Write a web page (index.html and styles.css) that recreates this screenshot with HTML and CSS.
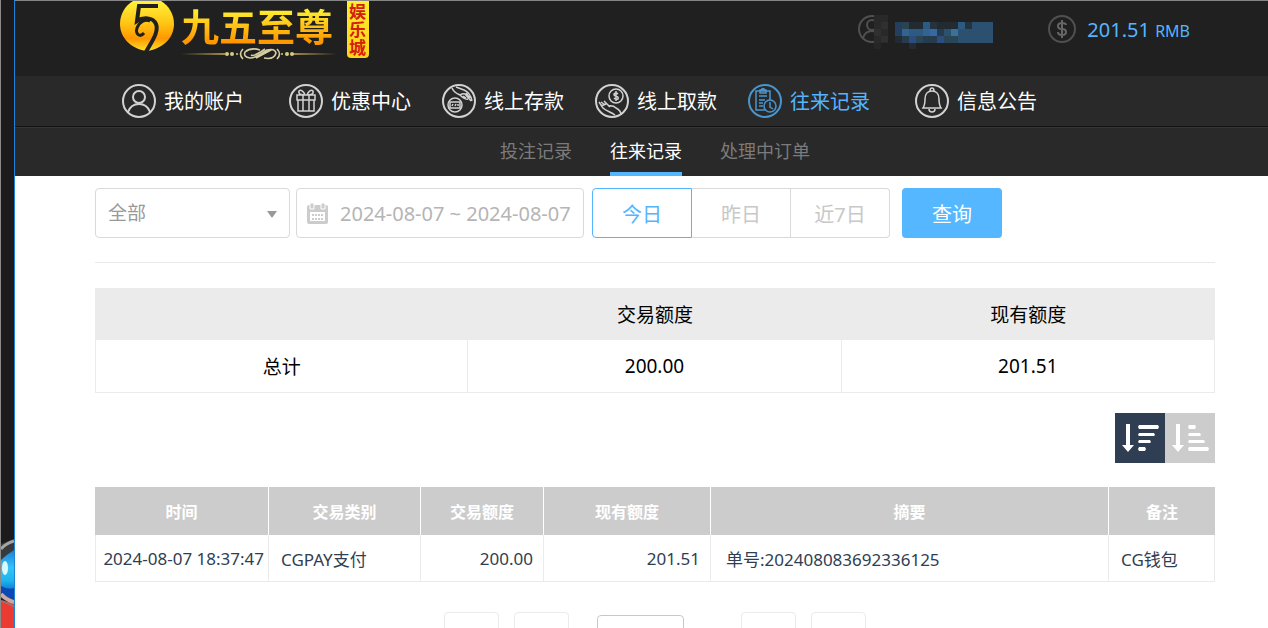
FILE: index.html
```
<!DOCTYPE html>
<html lang="zh-CN">
<head>
<meta charset="utf-8">
<meta name="viewport" content="width=device-width,initial-scale=1.0">
<title>往来记录</title>
<link rel="stylesheet" href="styles.css">
</head>
<body>
<div class="backdrop">
	<svg width="13" height="92" viewBox="0 0 13 92" aria-hidden="true">
		<defs>
			<linearGradient id="glass" x1="0" y1="0" x2="0" y2="1">
				<stop offset="0" stop-color="#1b7fdc"/>
				<stop offset=".4" stop-color="#35c4f4"/>
				<stop offset=".7" stop-color="#1db4ee"/>
				<stop offset="1" stop-color="#0b5fc6"/>
			</linearGradient>
		</defs>
		<path d="M0 66H13V92H0z" fill="#ea3a32"/>
		<path d="M0 8Q6 5 13 3V66L0 62z" fill="#37393b"/>
		<path d="M0 13Q4 8 13 5" fill="none" stroke="#a5a5a5" stroke-width="3"/>
		<path d="M0 24Q5 19 13 14V58Q6 56 0 50z" fill="url(#glass)"/>
		<ellipse cx="4" cy="32" rx="3" ry="7" fill="#d9fbff"/>
		<path d="M0 50Q7 54 13 52V63Q5 62 0 56z" fill="#0c48b5"/>
		<path d="M0 58Q5 64 13 66" fill="none" stroke="#c9a9a5" stroke-width="4"/>
		<path d="M0 65Q6 66 13 71" fill="none" stroke="#a96c68" stroke-width="2"/>
	</svg>
</div>
<div class="page">
	<header class="header">
		<a class="logo" href="#">
			<svg class="logo_mark" width="54" height="51" viewBox="0 0 54 51" aria-hidden="true">
				<defs>
					<linearGradient id="gold" x1="0" y1="0" x2="0" y2="1">
						<stop offset="0" stop-color="#fff23a"/>
						<stop offset=".45" stop-color="#ffc414"/>
						<stop offset=".75" stop-color="#ff9800"/>
						<stop offset="1" stop-color="#ffe02a"/>
					</linearGradient>
				</defs>
				<path d="M13 0H41C49 5 54 13 54 23C54 36 44 47 28 50C13 49 0 38 0 23C0 13 5 5 13 0z" fill="url(#gold)"/>
				<path d="M38 5H19L17 20C23 16 33 16 36 23C39 31 32 40 26 51" fill="none" stroke="#202020" stroke-width="4"/>
				<path d="M24 32C20 37 15 33 17 27C19 21 25 18 30 20" fill="none" stroke="#202020" stroke-width="3"/>
			</svg>
			<span class="logo_text">
				<strong>九五至尊</strong>
				<svg width="156" height="12" viewBox="0 0 156 12" aria-hidden="true">
					<path d="M0 6L44 5V7zM112 5L156 6L112 7z" fill="#a58f4c"/>
					<g fill="#d5ca82"><circle cx="46" cy="6" r="2"/><circle cx="51" cy="6" r="2"/><circle cx="56" cy="6" r="1"/><circle cx="101" cy="6" r="1"/><circle cx="106" cy="6" r="2"/><circle cx="111" cy="6" r="2"/></g>
					<path d="M62 1Q57 6 62 11M96 1Q101 6 96 11M79 2Q70 -1 64 4Q62 9 69 10Q75 10 86 2Q94 0 95 5Q93 12 83 10M70 7Q73 9 84 1M75 10L90 2" fill="none" stroke="#d8cfa0" stroke-width="1.6"/>
				</svg>
			</span>
			<span class="seal">娱乐城</span>
		</a>
		<div class="user">
			<svg class="user_name" width="136" height="28" viewBox="0 1 136 28" role="img" aria-label="会员账号">
				<g fill="none" stroke="#505050" stroke-width="2">
					<circle cx="14" cy="15" r="13"/>
					<circle cx="14" cy="11" r="5"/>
					<path d="M5 24Q7 17 14 17Q21 17 23 24"/>
				</g>
				<g shape-rendering="crispEdges">
					<path d="M16 1h14v28H16z" fill="#292929"/>
					<path d="M16 15h7v7h-7zM23 8h7v7h-7zM23 22h7v6h-7z" fill="#303030"/>
					<path d="M16 29h7v6h-7z" fill="#262626"/>
					<path d="M37 8h98v21H37z" fill="#2b5070"/>
					<path d="M37 8h7v14h-7z" fill="#263e5e"/>
					<path d="M44 8h7v7h-7z" fill="#294351"/>
					<path d="M51 8h14v7H51zM79 8h21v7H79zM37 22h7v7h-7z" fill="#222a32"/>
					<path d="M72 8h7v7h-7zM107 8h7v7h-7z" fill="#24343e"/>
					<path d="M65 8h7v7h-7zM100 8h7v7h-7zM51 15h14v7H51z" fill="#2d5a83"/>
					<path d="M44 15h7v7h-7zM65 15h7v7h-7z" fill="#326493"/>
					<path d="M72 15h7v7h-7z" fill="#3569a6"/>
					<path d="M93 15h7v7h-7z" fill="#3a7197"/>
					<path d="M79 15h7v7h-7zM44 22h7v7h-7zM65 22h14v7H65z" fill="#263b4c"/>
					<path d="M51 22h7v7h-7zM79 22h7v7h-7z" fill="#2d4d7d"/>
					<path d="M58 22h7v7h-7zM86 22h14v7H86z" fill="#294556"/>
					<path d="M51 29h7v6h-7z" fill="#222c35"/>
				</g>
			</svg>
			<svg width="28" height="28" viewBox="0 0 28 28" fill="none" stroke="#505050" stroke-width="2" aria-hidden="true">
				<circle cx="14" cy="14" r="13"/>
				<path d="M14 5V23M18 10Q18 8 14 8Q10 8 10 11Q10 14 14 14Q18 14 18 17Q18 20 14 20Q10 20 10 17" stroke="#666"/>
			</svg>
			<span class="balance">201.51 <small>RMB</small></span>
		</div>
	</header>
	<nav class="nav" aria-label="主导航">
		<div class="nav_group">
			<a href="#">
				<svg viewBox="0 0 34 34"><circle cx="17" cy="17" r="16"/><circle cx="17" cy="13" r="6"/><path d="M6 28Q9 20 17 20Q25 20 28 28"/></svg>
				我的账户
			</a>
		</div>
		<div class="nav_group">
			<a href="#">
				<svg viewBox="0 0 34 34"><circle cx="17" cy="17" r="16"/><g class="fine"><path d="M8 11H26V16H8zM9 16V27H25V16M14 11V27M20 11V27M16 11C12 11 9 10 10 7C12 5 15 8 16 11M18 11C22 11 25 10 24 7C22 5 19 8 18 11"/></g></svg>
				优惠中心
			</a>
			<a href="#">
				<svg viewBox="0 0 34 34"><circle cx="17" cy="17" r="16"/><g class="fine"><circle cx="13" cy="21" r="7"/><path d="M8 18H18V24H8zM10 22L11 20M13 22L14 20M16 22V20M10 4C12 9 16 10 18 11C20 13 23 16 26 15M14 3L22 6C27 8 29 12 30 17M18 11Q21 9 23 10L29 17M24 9L28 14M21 12L24 14"/></g></svg>
				线上存款
			</a>
			<a href="#">
				<svg viewBox="0 0 34 34"><circle cx="17" cy="17" r="16"/><g class="fine"><circle cx="21" cy="12" r="7"/><path d="M21 7V17M23 10Q21 8 19 10Q19 12 21 12Q24 13 23 15Q21 16 19 14M4 18L8 24C11 27 16 28 20 31M6 18L10 21M9 17L15 23M13 22Q18 21 21 24C25 26 26 29 26 31M6 22L11 20"/></g></svg>
				线上取款
			</a>
			<a class="on" href="#">
				<svg viewBox="0 0 34 34"><circle cx="17" cy="17" r="16"/><g class="fine"><path d="M17 26H8V7H22V16M12 6H18V9H12zM13 6Q15 3 17 6M11 12H19M11 16H17M11 19H15M11 22H15"/><circle cx="22" cy="22" r="6"/><path d="M22 18V23L25 25"/></g></svg>
				往来记录
			</a>
		</div>
		<div class="nav_group">
			<a href="#">
				<svg viewBox="0 0 34 34"><circle cx="17" cy="17" r="16"/><path class="fine" d="M8 24Q10 21 10 15C10 10 13 7 17 7C21 7 24 10 24 15Q24 21 26 24zM15 7Q15 4 17 4Q19 4 19 7M14 25Q14 28 17 28Q20 28 20 25"/></svg>
				信息公告
			</a>
		</div>
	</nav>
	<nav class="subnav" aria-label="记录">
		<a href="#">投注记录</a>
		<a class="on" href="#">往来记录</a>
		<a href="#">处理中订单</a>
	</nav>
	<main class="content">
		<form class="filter">
			<div class="select">
				<select aria-label="交易类别">
					<option>全部</option>
				</select>
			</div>
			<label class="date">
				<svg width="21" height="21" viewBox="0 0 21 21" role="img" aria-label="日期">
					<path d="M2 2H19Q21 2 21 4V19Q21 21 19 21H2Q0 21 0 19V4Q0 2 2 2z" fill="#ccc"/>
					<path d="M3 9H18V18H3z" fill="#fff"/>
					<path d="M3 0H7V6H3zM14 0H18V6H14z" fill="#ccc" stroke="#fff"/>
					<path d="M5 11h2v2H5zM8 11h2v2H8zM11 11h2v2h-2zM14 11h2v2h-2zM5 15h2v2H5zM8 15h2v2H8zM11 15h2v2h-2zM14 15h2v2h-2z" fill="#ccc"/>
				</svg>
				<input type="text" value="2024-08-07 ~ 2024-08-07">
			</label>
			<div class="range">
				<button type="button" class="on">今日</button>
				<button type="button">昨日</button>
				<button type="button">近7日</button>
			</div>
			<button type="submit" class="query">查询</button>
		</form>
		<table class="summary">
			<thead>
				<tr><th></th><th>交易额度</th><th>现有额度</th></tr>
			</thead>
			<tbody>
				<tr><td>总计</td><td>200.00</td><td>201.51</td></tr>
			</tbody>
		</table>
		<div class="sort">
			<button type="button" class="on" aria-label="降序">
				<svg width="50" height="50" viewBox="0 0 50 50"><path d="M11 11H15V32H19L13 39L7 32H11zM24 12H43L44 14L43 16H24L23 14zM24 20H39L40 22L39 23H24L23 22zM24 27H35L36 29L35 30H24L23 29zM24 34H30L31 36L30 38H24L23 36z"/></svg>
			</button>
			<button type="button" aria-label="升序">
				<svg width="50" height="50" viewBox="0 0 50 50"><path d="M11 11H15V32H19L13 39L7 32H11zM24 12H30L31 14L30 16H24L23 14zM24 20H35L36 22L35 23H24L23 22zM24 27H39L40 29L39 30H24L23 29zM24 34H43L44 36L43 38H24L23 36z"/></svg>
			</button>
		</div>
		<table class="records">
			<colgroup>
				<col class="c_time"><col class="c_type"><col class="c_amount"><col class="c_balance"><col><col class="c_note">
			</colgroup>
			<thead>
				<tr><th>时间</th><th>交易类别</th><th>交易额度</th><th>现有额度</th><th>摘要</th><th>备注</th></tr>
			</thead>
			<tbody>
				<tr>
					<td class="time">2024-08-07 18:37:47</td>
					<td>CGPAY支付</td>
					<td class="num">200.00</td>
					<td class="num">201.51</td>
					<td class="memo">单号:202408083692336125</td>
					<td>CG钱包</td>
				</tr>
			</tbody>
		</table>
		<div class="pager">
			<div class="pager_group">
				<button type="button" aria-label="首页"></button>
				<button type="button" aria-label="上一页"></button>
			</div>
			<input type="text" aria-label="页码">
			<div class="pager_group">
				<button type="button" aria-label="下一页"></button>
				<button type="button" aria-label="末页"></button>
			</div>
		</div>
	</main>
</div>
</body>
</html>
```
FILE: styles.css
```
* {
    box-sizing: border-box;
}

body {
    display: flex;
    height: 100vh;
    margin: 0;
    font-family: "Noto Sans", "Noto Sans CJK SC", sans-serif;
    font-size: 20px;
    background: #fff;
}

a {
    color: inherit;
    text-decoration: none;
}

svg {
    display: block;
    flex: none;
}

button, input, select {
    margin: 0;
    padding: 0;
    border: 0;
    background: none;
    font: inherit;
    color: inherit;
}

.backdrop {
    display: flex;
    flex: none;
    align-items: flex-end;
    overflow: hidden;
    width: 15px;
    border-left: 1px solid #8a8a8a;
    border-right: 1px solid #1c83d8;
    background: #1c1a1b;
}

.page {
    flex: 1;
    min-width: 0;
    overflow-y: auto;
    scrollbar-width: none;
}

/* header */
.header {
    display: flex;
    justify-content: space-between;
    height: 76px;
    padding: 0 78px 0 105px;
    border-top: 1px solid #868686;
    background: #202020;
}

.logo {
    display: flex;
    align-items: flex-start;
    gap: 7px;
}

.logo_text strong {
    display: block;
    font-family: "Noto Sans CJK SC", sans-serif;
    font-size: 38px;
    font-weight: 700;
    line-height: 47px;
    color: transparent;
    background: linear-gradient(#ffee2e 20%, #ff9800 85%);
    -webkit-background-clip: text;
    background-clip: text;
}

.seal {
    width: 22px;
    height: 57px;
    margin-left: 3px;
    padding: 1px 2px;
    border-radius: 0 0 4px 4px;
    background: linear-gradient(#ffee2e, #ffd21c);
    font-family: "Noto Sans CJK SC", sans-serif;
    font-size: 17px;
    font-weight: 700;
    line-height: 18px;
    color: #d3200c;
}

.user {
    display: flex;
    align-items: center;
    height: 56px;
}

.user_name {
    overflow: visible;
    margin-right: 54px;
}

.balance {
    margin-left: 11px;
    color: #54b5ff;
}

.balance small {
    font-size: 16px;
}

/* navigation */
.nav {
    display: flex;
    gap: 45px;
    height: 51px;
    padding: 0 0 1px 107px;
    border-bottom: 1px solid #111;
    background: #292929;
    color: #fff;
}

.nav_group {
    display: flex;
    gap: 31px;
}

.nav a {
    display: flex;
    align-items: center;
    gap: 8px;
    white-space: nowrap;
}

.nav svg {
    width: 34px;
    height: 34px;
    fill: none;
    stroke: #d2d2d2;
    stroke-width: 2;
}

.nav .fine {
    stroke-width: 1.5;
}

.nav .on {
    color: #54b5ff;
}

.nav .on svg {
    stroke: #4a96cc;
}

.subnav {
    display: flex;
    justify-content: center;
    gap: 38px;
    height: 49px;
    padding-left: 27px;
    border-top: 1px solid #363636;
    background: #292929;
    font-size: 18px;
    line-height: 46px;
    color: #7b7b7b;
}

.subnav .on {
    border-bottom: 4px solid #54b5ff;
    color: #fff;
}

.content {
    padding: 12px 53px 0 80px;
}

/* filter */
.filter {
    display: flex;
    height: 75px;
    border-bottom: 1px solid #e9e9e9;
}

.select {
    position: relative;
    width: 195px;
    height: 50px;
    margin-right: 6px;
}

.select select {
    width: 100%;
    height: 100%;
    padding-left: 12px;
    border: 1px solid #d9d9d9;
    border-radius: 4px;
    font-size: 19px;
    color: #999;
    appearance: none;
}

.select::after {
    content: "";
    position: absolute;
    top: 23px;
    right: 13px;
    border: 5px solid transparent;
    border-top: 7px solid #999;
    border-bottom: 0;
    pointer-events: none;
}

.date {
    display: flex;
    align-items: center;
    gap: 12px;
    width: 288px;
    height: 50px;
    margin-right: 8px;
    padding-left: 10px;
    border: 1px solid #d9d9d9;
    border-radius: 4px;
    color: #b5b5b5;
}

.date input {
    flex: 1;
    min-width: 0;
}

.range {
    display: flex;
    margin-right: 12px;
}

.range button {
    width: 99px;
    height: 50px;
    border: 1px solid #d9d9d9;
    border-left: 0;
    color: #c8c8c8;
}

.range .on {
    width: 100px;
    border: 1px solid #54b5ff;
    border-radius: 4px 0 0 4px;
    color: #54b5ff;
}

.range button:last-child {
    border-radius: 0 4px 4px 0;
}

.query {
    width: 100px;
    height: 50px;
    border-radius: 4px;
    background: #54b7ff;
    color: #fff;
}

/* tables */
table {
    width: 100%;
    table-layout: fixed;
    border-spacing: 0;
}

th, td {
    padding: 0;
}

td {
    border: 1px solid #ebebeb;
    border-width: 0 1px 1px 0;
}

td:first-child {
    border-left-width: 1px;
}

.summary {
    margin-top: 25px;
    font-size: 19px;
    text-align: center;
}

.summary th {
    height: 52px;
    background: #ebebeb;
    font-weight: 400;
}

.summary td {
    height: 53px;
}

.sort {
    display: flex;
    justify-content: flex-end;
    margin: 20px 0 24px;
}

.sort button {
    background: #ccc;
}

.sort .on {
    background: #2f3e52;
}

.sort path {
    fill: #fff;
}

.c_time {
    width: 174px;
}

.c_type {
    width: 152px;
}

.c_amount {
    width: 123px;
}

.c_balance {
    width: 167px;
}

.c_note {
    width: 106px;
}

.records th {
    height: 48px;
    border-right: 1px solid #fff;
    background: #ccc;
    font-size: 16px;
    color: #fff;
}

.records th:last-child {
    border-right: 0;
}

.records td {
    height: 47px;
    padding: 0 12px;
    font-size: 17px;
    color: #2f3e52;
    white-space: nowrap;
}

.records .time {
    padding: 0 4px;
    text-align: right;
}

.records .num {
    padding-right: 10px;
    text-align: right;
}

.records .memo {
    padding-left: 15px;
}

/* pager */
.pager {
    display: flex;
    justify-content: center;
    align-items: center;
    margin: 30px 0;
}

.pager_group {
    display: flex;
    gap: 15px;
}

.pager button {
    width: 55px;
    height: 50px;
    border: 1px solid #ebebeb;
    border-radius: 4px;
}

.pager input {
    width: 87px;
    height: 44px;
    margin: 0 57px 0 28px;
    border: 1px solid #c8c8c8;
    border-radius: 4px;
    text-align: center;
}
```
